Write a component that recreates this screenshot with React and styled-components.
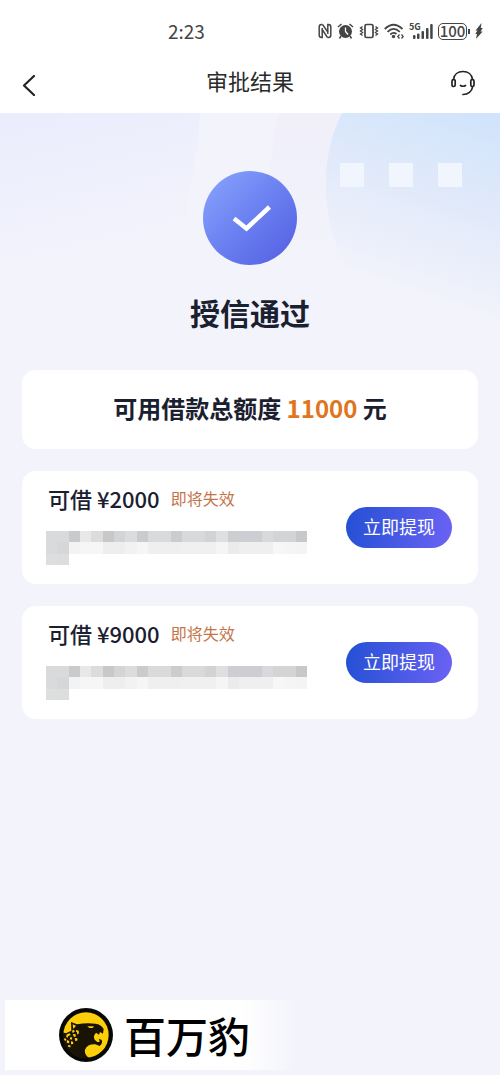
import React from "react";
import styled, { createGlobalStyle } from "styled-components";

const loans = [
  { id: "loan-1", amount: "¥2000" },
  { id: "loan-2", amount: "¥9000" },
];

// grey blocks that cover the loan detail line
const maskRows = [
  ["#d9dadb", "#d9dadb", "#c9cacc", "#e8e8e9", "#dcdcdd", "#c6c8ca", "#d3d4d6", "#dbdcdd", "#cacbcd", "#d9dadb", "#d9dadb", "#cbccce", "#d8d9da", "#d8d9da", "#d2d3d5", "#dedfe0", "#cdced1", "#cdced1", "#cdced1", "#d8d9da", "#d3d4d5", "#d3d4d5", "#c6c8ca"],
  ["#d9dadb", "#d6d7d9", "#f3f3f3", "#f6f6f6", "#f6f6f6", "#eeeeee", "#eeeeee", "#f2f2f2", "#f6f6f6", "#efefef", "#efefef", "#efefef", "#f0f0f0", "#f0f0f0", "#f0f0f0", "#f5f5f5", "#ebebec", "#efefef", "#efefef", "#efefef", "#f7f7f7", "#f5f5f5", "#f4f4f4"],
  ["#dddedf", "#dcdddd"],
];

function MaskedDetail() {
  return (
    <Mask viewBox="0 0 23 3" preserveAspectRatio="none" aria-hidden="true">
      {maskRows.map((row, y) =>
        row.map((fill, x) => <rect key={`${x}-${y}`} x={x} y={y} width="1" height="1" fill={fill} />)
      )}
    </Mask>
  );
}

function StatusIcons() {
  return (
    <StatusGroup>
      <svg width="14" height="16" viewBox="0 0 14 16" fill="none" stroke="#454545">
        <path d="M4.500 1.500H3.500Q1.200 1.500 1.200 4V12Q1.200 14.500 3.500 14.500H4.200V5" strokeWidth="1.500" />
        <path d="M9.500 14.500H10.500Q12.800 14.500 12.800 12V4Q12.800 1.500 10.500 1.500H9.800V11" strokeWidth="1.500" />
        <path d="M4.500 1.500L9.800 9M4.200 6.500L9.500 14.500" strokeWidth="1.400" />
      </svg>
      <svg width="17" height="16" viewBox="0 0 17 16">
        <circle cx="8.5" cy="8.5" r="6.500" fill="#454545" />
        <path d="M1 4L4.500 1M16 4L12.500 1M4 13L2.500 15.500M13 13L14.500 15.500" stroke="#454545" strokeWidth="1.500" fill="none" />
        <path d="M8.500 4.500V8.500L11 11.500" stroke="#fff" strokeWidth="1.300" fill="none" />
      </svg>
      <svg width="20" height="16" viewBox="0 0 20 16" fill="none" stroke="#454545">
        <rect x="6" y="1.500" width="8" height="13" rx="1.500" strokeWidth="1.700" />
        <path d="M3.500 3.500L1.500 5L3.500 6.500L1.500 8L3.500 9.500L1.500 11L3.500 12.500M16.500 3.500L18.500 5L16.500 6.500L18.500 8L16.500 9.500L18.500 11L16.500 12.500" strokeWidth="1.400" />
      </svg>
      <svg width="20" height="16" viewBox="0 0 20 16" fill="none" stroke="#454545" strokeWidth="1.800">
        <path d="M.8 6Q9.500-2.500 18.500 6M3.500 8.800Q9.500 3 15.800 8.800M6.300 11.500Q9.500 8.500 12.500 11" />
        <circle cx="9.500" cy="13.500" r="1.700" fill="#454545" stroke="none" />
        <path d="M15.500 11.500L13.800 13.500L15.500 15.500M17.500 11.500L19.200 13.500L17.500 15.500" strokeWidth="1.300" />
      </svg>
      <Signal>
        <span>5G</span>
        <svg width="20" height="16" viewBox="0 0 20 16" fill="#454545">
          <rect x="0" y="12" width="2.500" height="4" rx="1" />
          <rect x="4" y="10.500" width="2.500" height="5.500" rx="1" />
          <rect x="8.500" y="8" width="2.500" height="8" rx="1" />
          <rect x="13" y="5" width="2.500" height="11" rx="1" />
          <rect x="17.200" y="1" width="2.500" height="15" rx="1" />
        </svg>
      </Signal>
      <Battery>
        <BatteryLevel>100</BatteryLevel>
        <BatteryTip />
      </Battery>
      <svg width="8" height="16" viewBox="0 0 8 16" fill="#454545">
        <path d="M6.500 0L.5 7.500H2.500L.3 11H2L1 16L7.700 8.500H5.500L7.800 5H5.800Z" />
      </svg>
    </StatusGroup>
  );
}

function HeroPattern() {
  return (
    <Pattern viewBox="0 0 500 260" aria-hidden="true">
      <defs>
        <linearGradient id="leftGlow" gradientUnits="userSpaceOnUse" x1="40" y1="0" x2="75" y2="150">
          <stop offset="0" stopColor="#ebedfd" />
          <stop offset="1" stopColor="#f2f3fb" />
        </linearGradient>
        <linearGradient id="rightGlow" gradientUnits="userSpaceOnUse" x1="500" y1="10" x2="440" y2="190">
          <stop offset="0" stopColor="#d1e4fb" />
          <stop offset="0.5" stopColor="#e2eafa" />
          <stop offset="1" stopColor="#f2f3fb" />
        </linearGradient>
        <linearGradient id="ring" gradientUnits="userSpaceOnUse" x1="0" y1="0" x2="0" y2="160">
          <stop offset="0" stopColor="#f0effa" />
          <stop offset="1" stopColor="#f2f3fb" />
        </linearGradient>
      </defs>
      <rect width="500" height="260" fill="url(#leftGlow)" />
      <path d="M200 0C195 80 175 110 165 260H500V0Z" fill="#f2f3fb" />
      <path d="M279 0C262 70 270 130 312 200H500V0Z" fill="url(#ring)" />
      <path d="M342 0C322 40 320 90 338 135C355 180 400 225 500 235V0Z" fill="url(#rightGlow)" />
      <g fill="#f1f5fd">
        <rect x="340" y="50" width="24" height="24" />
        <rect x="389" y="50" width="24" height="24" />
        <rect x="438" y="50" width="24" height="24" />
      </g>
    </Pattern>
  );
}

function LeopardLogo() {
  return (
    <svg width="54" height="54" viewBox="13 12 162 162" aria-hidden="true">
      <defs>
        <clipPath id="coin">
          <circle cx="94" cy="93" r="70" />
        </clipPath>
      </defs>
      <circle cx="94" cy="93" r="81" fill="#080806" />
      <circle cx="94" cy="93" r="68" fill="#fccf08" />
      <g clipPath="url(#coin)">
        <path
          d="M18 84L34 88L50 80L49 54L67 61Q94 56 122 59Q140 61 147 75L145 89L136 84L133 92L124 86Q114 96 120 107L128 114L135 114L133 104L141 108Q145 120 135 126L122 121Q98 120 91 137Q88 153 106 164V178H14Z"
          fill="#181305"
        />
        <path d="M98 67L118 67L114 72L104 72Z" fill="#fccf08" />
        <path d="M54 61L64 65L56 75Z" fill="#fccf08" />
        <g fill="#fccf08">
          <path d="M52 80L58 77L60 83L54 87Z" />
          <path d="M65 78L72 80L73 88L68 92L67 85L63 82Z" />
          <path d="M54 91L62 90L64 97L58 99Z" />
          <path d="M37 91L45 88L48 93L41 96L38 102L34 97Z" />
          <path d="M48 98L53 101L51 107L45 106Z" />
          <path d="M30 102L35 105L34 111L28 108Z" />
          <path d="M60 103L67 102L69 109L62 112Z" />
          <path d="M37 108L44 111L43 118L36 116Z" />
          <path d="M49 112L55 113L56 120L49 121Z" />
          <path d="M40 123L47 124L48 130L41 129Z" />
        </g>
      </g>
    </svg>
  );
}

export default function App() {
  return (
    <Page>
      <GlobalStyle />
      <StatusBar>
        <time>2:23</time>
        <StatusIcons />
      </StatusBar>
      <Header>
        <IconButton type="button" aria-label="返回">
          <svg width="14" height="22" viewBox="0 0 14 22" fill="none" stroke="#222" strokeWidth="2.200" strokeLinecap="round" strokeLinejoin="round">
            <path d="M12 2L2 11.500L12 21" />
          </svg>
        </IconButton>
        <h1>审批结果</h1>
        <IconButton type="button" aria-label="客服">
          <svg width="26" height="26" viewBox="0 0 26 26" fill="none" stroke="#222" strokeWidth="1.700" strokeLinecap="round">
            <path d="M3.500 9.500C4 4.500 8 1.500 13 1.500S22 4.500 22.500 9.500" />
            <rect x="2" y="9.500" width="3.200" height="7" rx="1.600" />
            <rect x="20.800" y="9.500" width="3.200" height="7" rx="1.600" />
            <path d="M22.500 17C22 21.500 18 24.500 13 24.500M10.500 15.500Q13 17 15.500 15.500" />
          </svg>
        </IconButton>
      </Header>
      <Main>
        <HeroPattern />
        <Result>
          <Badge>
            <svg width="40" height="28" viewBox="0 0 40 28" fill="none" stroke="#fff" strokeWidth="4.500">
              <path d="M2 13.500L14.500 23.500L37.500 2" />
            </svg>
          </Badge>
          <h2>授信通过</h2>
        </Result>
        <TotalCard>
          可用借款总额度 <em>11000</em> 元
        </TotalCard>
        {loans.map((loan) => (
          <LoanCard key={loan.id}>
            <LoanInfo>
              <LoanTitle>
                <h3>可借 {loan.amount}</h3>
                <span>即将失效</span>
              </LoanTitle>
              <MaskedDetail />
            </LoanInfo>
            <WithdrawButton type="button">立即提现</WithdrawButton>
          </LoanCard>
        ))}
      </Main>
      <Brand>
        <LeopardLogo />
        <span>百万豹</span>
      </Brand>
    </Page>
  );
}

const GlobalStyle = createGlobalStyle`
  * {
    box-sizing: border-box;
  }
  body {
    margin: 0;
    background: #f2f3fb;
    font-family: "Noto Sans CJK SC", sans-serif;
    color: #1b2030;
  }
  h1, h2, h3 {
    margin: 0;
  }
  button {
    border: none;
    font-family: inherit;
    cursor: pointer;
  }
  svg {
    display: block;
    flex-shrink: 0;
  }
`

const Page = styled.div`
  display: flex;
  flex-direction: column;
  min-height: 100vh;
`

const StatusBar = styled.div`
  display: flex;
  justify-content: space-between;
  align-items: center;
  padding: 16px 17px 0 168px;
  background: #fff;
  time {
    font-size: 19px;
    line-height: 30px;
    color: #454545;
  }
`

const StatusGroup = styled.div`
  display: flex;
  align-items: center;
  gap: 5px;
`

const Signal = styled.div`
  position: relative;
  display: flex;
  justify-content: flex-end;
  width: 24px;
  span {
    position: absolute;
    top: 0;
    left: 0;
    font-size: 9px;
    font-weight: 700;
    line-height: 8px;
    color: #454545;
  }
`

const Battery = styled.div`
  display: flex;
  align-items: center;
  gap: 1px;
  width: 32px;
`

const BatteryLevel = styled.span`
  width: 30px;
  height: 17px;
  border: 1px solid #454545;
  border-radius: 5px;
  font-size: 15px;
  font-weight: 500;
  line-height: 14px;
  text-align: center;
  color: #454545;
`

const BatteryTip = styled.i`
  width: 2px;
  height: 5px;
  background: #454545;
`

const Header = styled.header`
  display: flex;
  justify-content: space-between;
  align-items: center;
  height: 67px;
  padding: 6px 17px 0;
  background: #fff;
  h1 {
    padding-bottom: 6px;
    font-size: 22px;
    font-weight: 400;
    line-height: 30px;
    color: #2a2a2a;
  }
`

const IconButton = styled.button`
  display: flex;
  justify-content: center;
  align-items: center;
  width: 40px;
  height: 40px;
  padding: 0;
  background: none;
  &:first-child {
    justify-content: flex-start;
    padding: 4px 0 0 5px;
  }
`

const Main = styled.main`
  position: relative;
  display: flex;
  flex-direction: column;
  gap: 22px;
  padding: 58px 22px 32px;
`

const Pattern = styled.svg`
  position: absolute;
  top: 0;
  left: 0;
  z-index: -1;
  width: 100%;
`

const Result = styled.section`
  display: flex;
  flex-direction: column;
  align-items: center;
  gap: 24px;
  padding-bottom: 13px;
  h2 {
    font-size: 30px;
    font-weight: 700;
    line-height: 46px;
  }
`

const Badge = styled.div`
  display: flex;
  justify-content: center;
  align-items: center;
  width: 94px;
  height: 94px;
  padding: 2px 0 0 4px;
  border-radius: 50%;
  background: linear-gradient(135deg, #87a2fd 5%, #6a80f0 50%, #5560e4 95%);
`

const TotalCard = styled.section`
  padding: 22px 16px 26px;
  border-radius: 14px;
  background: #fff;
  font-size: 24px;
  font-weight: 700;
  line-height: 31px;
  text-align: center;
  em {
    font-style: normal;
    color: #e07520;
  }
`

const LoanCard = styled.section`
  display: flex;
  justify-content: space-between;
  align-items: center;
  padding: 14px 26px 19px 24px;
  border-radius: 14px;
  background: #fff;
`

const LoanInfo = styled.div`
  display: flex;
  flex-direction: column;
  gap: 20px;
`

const LoanTitle = styled.div`
  display: flex;
  align-items: center;
  gap: 11px;
  padding-left: 2px;
  line-height: 26px;
  h3 {
    font-size: 22px;
    font-weight: 500;
  }
  span {
    font-size: 16px;
    color: #c4744a;
  }
`

const Mask = styled.svg`
  width: 261px;
  height: 34px;
  shape-rendering: crispEdges;
`

const WithdrawButton = styled.button`
  height: 41px;
  margin-top: 4px;
  padding: 0 17px 2px;
  border-radius: 21px;
  background: linear-gradient(100deg, #2350d3, #6c62f5);
  font-size: 18px;
  line-height: 24px;
  color: #fff;
`

const Brand = styled.footer`
  display: flex;
  align-items: center;
  gap: 11px;
  width: 295px;
  height: 70px;
  padding-left: 54px;
  margin: auto 0 5px 5px;
  background: linear-gradient(90deg, #fff 80%, #f2f3fb);
  span {
    font-size: 42px;
    font-weight: 500;
    line-height: 60px;
    color: #000;
  }
`
